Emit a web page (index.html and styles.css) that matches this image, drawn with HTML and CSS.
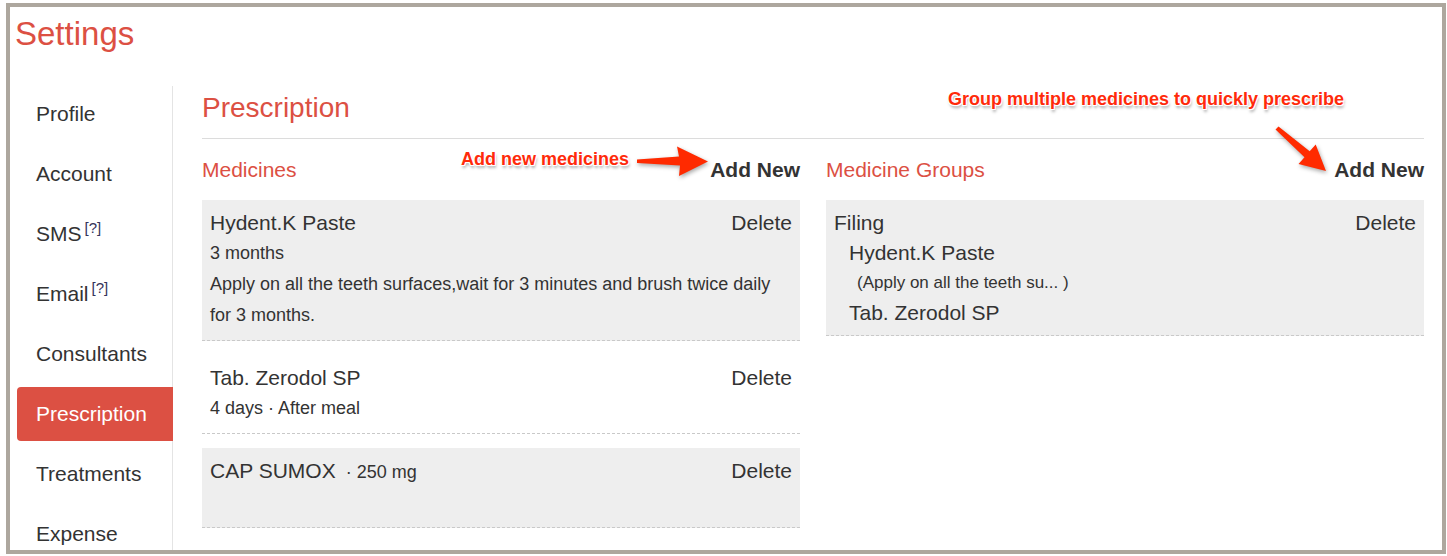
FILE: index.html
```html
<!DOCTYPE html>
<html lang="en">
<head>
<meta charset="utf-8">
<title>Settings</title>
<link rel="stylesheet" href="styles.css">
</head>
<body>
<div class="frame">
  <h1 class="title">Settings</h1>
  <div class="layout">
    <nav class="sidebar">
      <a class="nav-item">Profile</a>
      <a class="nav-item">Account</a>
      <a class="nav-item">SMS<sup class="hint">[?]</sup></a>
      <a class="nav-item">Email<sup class="hint">[?]</sup></a>
      <a class="nav-item">Consultants</a>
      <a class="nav-item active">Prescription</a>
      <a class="nav-item">Treatments</a>
      <a class="nav-item">Expense</a>
    </nav>
    <main class="main">
      <h2 class="section-title">Prescription</h2>
      <div class="columns">
        <section class="column">
          <div class="column-head">
            <span class="column-title">Medicines</span>
            <a class="add-new">Add New</a>
          </div>
          <div class="card shaded">
            <div class="card-row"><span class="item-name">Hydent.K Paste</span><a class="delete">Delete</a></div>
            <div class="meta">3 months</div>
            <div class="meta">Apply on all the teeth surfaces,wait for 3 minutes and brush twice daily for 3 months.</div>
          </div>
          <div class="card">
            <div class="card-row"><span class="item-name">Tab. Zerodol SP</span><a class="delete">Delete</a></div>
            <div class="meta">4 days · After meal</div>
          </div>
          <div class="card shaded">
            <div class="card-row"><span class="item-name">CAP SUMOX<span class="dose">· 250 mg</span></span><a class="delete">Delete</a></div>
            <div class="meta">&nbsp;</div>
          </div>
        </section>
        <section class="column">
          <div class="column-head">
            <span class="column-title">Medicine Groups</span>
            <a class="add-new">Add New</a>
          </div>
          <div class="card shaded group-card">
            <div class="card-row"><span class="item-name">Filing</span><a class="delete">Delete</a></div>
            <div class="group-item">Hydent.K Paste</div>
            <div class="group-note">(Apply on all the teeth su... )</div>
            <div class="group-item">Tab. Zerodol SP</div>
          </div>
        </section>
      </div>
    </main>
  </div>
</div>

<div class="note note-add">Add new medicines</div>
<svg class="arrow arrow-add" width="85" height="45" viewBox="0 0 85 45">
  <polygon points="7,19.5 49,16.5 47,6.5 78,21.5 49,36 50,25.5 7,23"/>
</svg>

<div class="note note-group">Group multiple medicines to quickly prescribe</div>
<svg class="arrow arrow-group" width="65" height="55" viewBox="0 0 65 55">
  <polygon points="8.5,4.5 39.7,29.3 45.7,22.5 56,49 28.5,42.1 34.5,35.3 5.5,7.5"/>
</svg>
</body>
</html>
```

FILE: styles.css
```css
html, body {
  margin: 0;
  padding: 0;
}

body {
  position: relative;
  height: 556px;
  overflow: hidden;
  background: #fff;
  color: #333;
  font-family: "Liberation Sans", Arial, Helvetica, sans-serif;
}

.frame {
  margin: 3px 1px 0 6px;
  border: 4px solid #ada79e;
  height: 543px;
  padding-left: 5px;
  display: flex;
  flex-direction: column;
  overflow: hidden;
  background: #fff;
}

.title {
  margin: 7px 0 32px;
  font-size: 33px;
  line-height: 40px;
  font-weight: normal;
  color: #dc5043;
}

.layout {
  flex: 1;
  min-height: 0;
  display: flex;
}

.sidebar {
  flex-shrink: 0;
  width: 155px;
  margin-left: 2px;
  padding-top: 1px;
  border-right: 1px solid #e4e4e4;
}

.nav-item {
  display: block;
  height: 54px;
  line-height: 54px;
  margin-bottom: 6px;
  padding-left: 19px;
  font-size: 21px;
  color: #333;
}

.nav-item.active {
  background: #dc5043;
  color: #fff;
  border-radius: 4px 0 0 4px;
  margin-right: -1px;
}

.hint {
  font-size: 15px;
  line-height: 0;
  vertical-align: 8px;
  margin-left: 3px;
  color: #35335a;
}

.main {
  flex: 1;
  min-width: 0;
  padding: 5px 18px 0 29px;
}

.section-title {
  margin: 0;
  padding-bottom: 13px;
  border-bottom: 1px solid #dcdcdc;
  font-size: 28px;
  line-height: 34px;
  font-weight: normal;
  color: #dc5043;
}

.columns {
  display: grid;
  grid-template-columns: 1fr 1fr;
  column-gap: 26px;
}

.column-head {
  display: flex;
  justify-content: space-between;
  margin: 16px 0 15px;
  font-size: 21px;
  line-height: 30px;
}

.column-title {
  color: #dc5043;
}

.add-new {
  font-weight: bold;
  color: #333;
}

.card {
  padding: 8px 8px 9px;
  margin-bottom: 14px;
  border-bottom: 1px dashed #c9c9c9;
}

.card.shaded {
  background: #eee;
}

.card-row {
  display: flex;
  justify-content: space-between;
  font-size: 21px;
  line-height: 30px;
}

.delete {
  color: #333;
}

.dose {
  font-size: 18px;
  margin-left: 10px;
}

.meta {
  font-size: 18px;
  line-height: 31px;
}

.group-card {
  padding-bottom: 7px;
}

.group-item {
  padding-left: 15px;
  font-size: 21px;
  line-height: 30px;
}

.group-note {
  padding-left: 23px;
  font-size: 17px;
  line-height: 30px;
}

.note {
  position: absolute;
  font-size: 18px;
  line-height: 20px;
  font-weight: bold;
  color: #ff2a0a;
  white-space: nowrap;
  text-shadow: -1px -1px 0 #fff, 1px -1px 0 #fff, -1px 1px 0 #fff, 1px 1px 0 #fff, 1px 3px 3px rgba(0, 0, 0, 0.35);
}

.note-add {
  left: 461px;
  top: 149px;
}

.note-group {
  left: 948px;
  top: 89px;
}

.arrow {
  position: absolute;
  fill: #ff2a00;
  filter: drop-shadow(1px 2px 2px rgba(0, 0, 0, 0.35));
}

.arrow-add {
  left: 630px;
  top: 140px;
}

.arrow-group {
  left: 1270px;
  top: 122px;
}
```
